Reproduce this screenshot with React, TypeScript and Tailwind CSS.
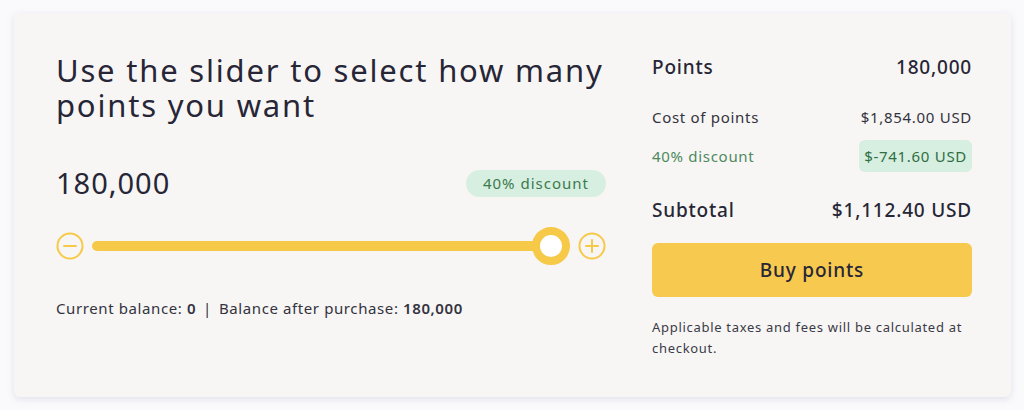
import React from "react";

function CircleIcon({ plus }: { plus?: boolean }) {
  return (
    <svg width="28" height="28" viewBox="0 0 28 28" fill="none" className="shrink-0">
      <circle cx="14" cy="14" r="12.5" stroke="#f7c948" strokeWidth="2" />
      <path d="M8 14h12" stroke="#f7c948" strokeWidth="2" strokeLinecap="round" />
      {plus && <path d="M14 8v12" stroke="#f7c948" strokeWidth="2" strokeLinecap="round" />}
    </svg>
  );
}

export default function App() {
  return (
    <div className="min-h-[410px] bg-[#fafafc] pt-[13px] pl-[14px] pr-[13px] font-['Noto_Sans',sans-serif] text-[#272637]">
      <div className="flex h-[384px] gap-[46px] rounded-[6px] bg-[#f7f6f4] pt-[40px] pl-[42px] pr-[39px] shadow-[0_2px_6px_rgba(200,200,220,0.5)]">
        {/* Slider side */}
        <div className="w-[550px] shrink-0">
          <h1 className="w-[570px] text-[31px] leading-[35px] tracking-[1.8px]">
            Use the slider to select how many points you want
          </h1>

          <div className="mt-[43px] flex items-center justify-between">
            <span className="text-[29px] leading-[34px] tracking-[1px]">180,000</span>
            <span className="rounded-full bg-[#d7efe0] px-[17px] py-[3px] text-[15px] leading-[21px] tracking-[1px] text-[#3b7a4e]">
              40% discount
            </span>
          </div>

          <div className="mt-[26px] flex items-center gap-[8px]">
            <CircleIcon />
            <div className="relative flex h-[40px] flex-1 items-center">
              <div className="h-[10px] w-full rounded-full bg-[#f7c948]" />
              <div className="absolute right-0 top-[1px] h-[38px] w-[38px] rounded-full border-[8px] border-[#f7c948] bg-white" />
            </div>
            <CircleIcon plus />
          </div>

          <p className="mt-[32px] text-[15px] leading-[20px] tracking-[0.6px] text-[#333340]">
            Current balance: <span className="font-semibold">0</span>
            <span className="mx-[7px]">|</span>
            Balance after purchase: <span className="font-semibold">180,000</span>
          </p>
        </div>

        {/* Summary side */}
        <div className="flex-1">
          <div className="flex items-center justify-between text-[19px] leading-[28px] font-medium tracking-[0.8px]">
            <span>Points</span>
            <span>180,000</span>
          </div>
          <div className="mt-[25px] flex items-center justify-between text-[15px] leading-[22px] tracking-[0.7px] text-[#333340]">
            <span>Cost of points</span>
            <span>$1,854.00 USD</span>
          </div>
          <div className="mt-[12px] flex items-center justify-between text-[15px] leading-[22px] tracking-[0.7px]">
            <span className="text-[#4c8a5e]">40% discount</span>
            <span className="rounded-[6px] bg-[#d7efe0] px-[5px] py-[5px] text-[#2f6e43]">$-741.60 USD</span>
          </div>
          <div className="mt-[24px] flex items-center justify-between text-[19px] leading-[28px] font-medium tracking-[0.8px]">
            <span>Subtotal</span>
            <span>$1,112.40 USD</span>
          </div>
          <button className="mt-[19px] h-[54px] w-full rounded-[6px] bg-[#f7c94f] text-[19px] font-medium tracking-[0.8px] text-[#272637]">
            Buy points
          </button>
          <p className="mt-[20px] text-[13px] leading-[21px] tracking-[0.7px] text-[#3a3a48]">
            Applicable taxes and fees will be calculated at checkout.
          </p>
        </div>
      </div>
    </div>
  );
}
